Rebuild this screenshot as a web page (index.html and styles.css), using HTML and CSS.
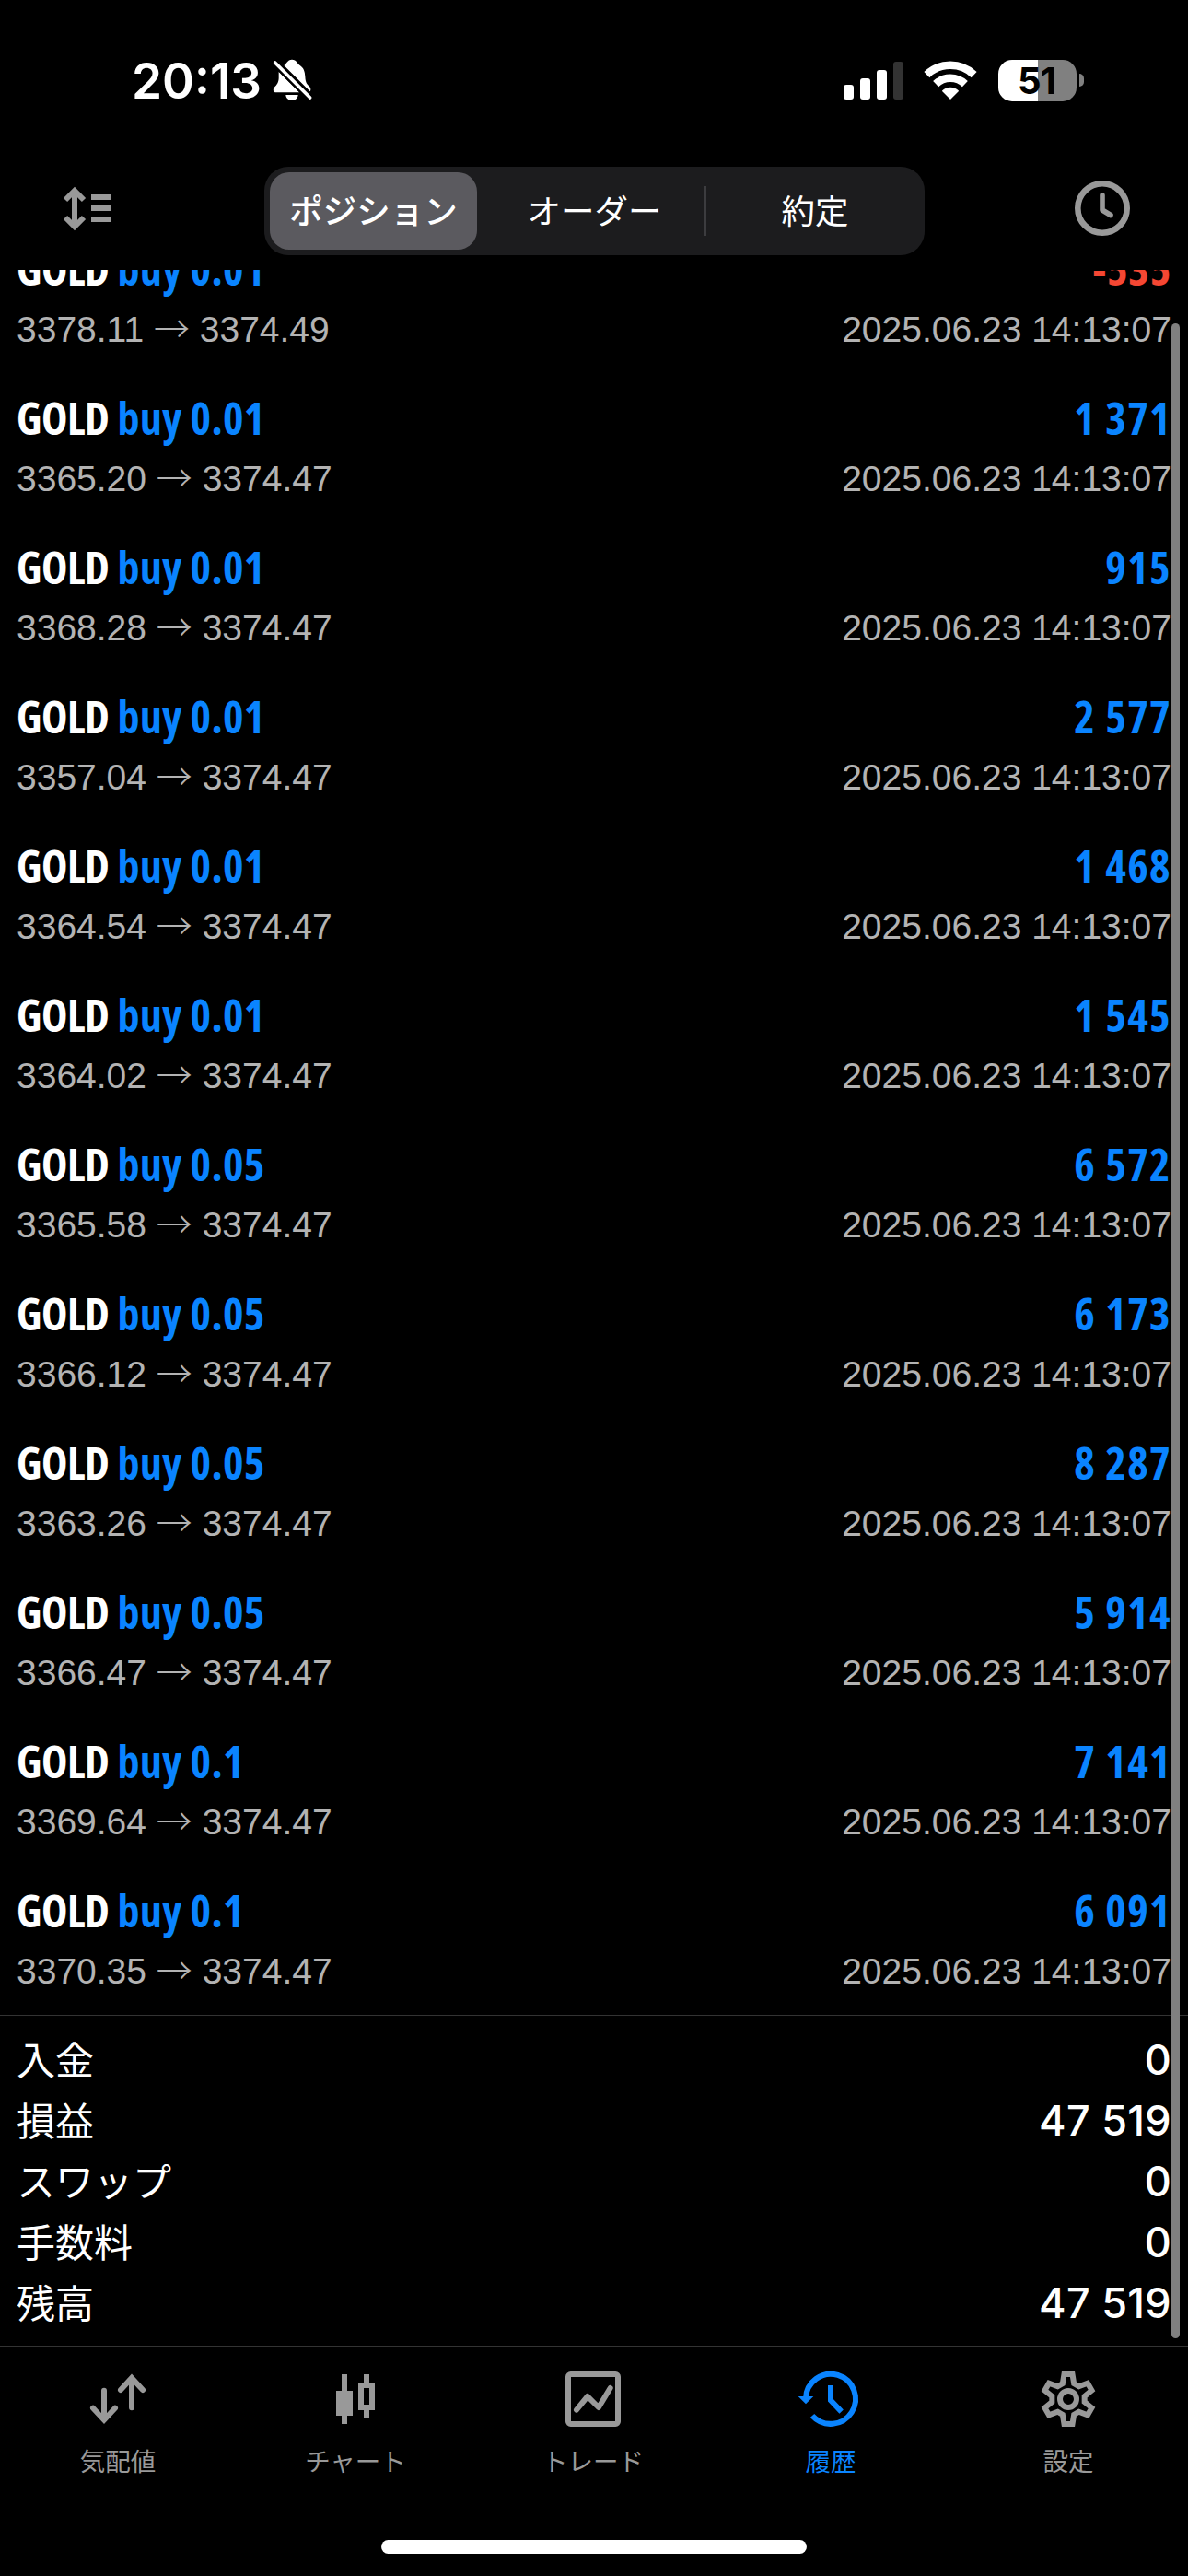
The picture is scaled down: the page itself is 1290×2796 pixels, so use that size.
FILE: index.html
```
<!DOCTYPE html>
<html lang="ja">
<head>
    <meta charset="utf-8">
    <title>履歴</title>
    <link rel="stylesheet" href="styles.css">
</head>
<body>
    <div class="screen">
        <div class="status-bar">
            <span class="time">20:13</span>
            <svg class="bell" viewBox="529 75 129 138">
                <path fill="#fff" d="M566 96 C574 92 577 77 592 77 C607 77 610 91 617 95 C631 104 634 116 635 132 C636 152 641 158 650 166 C654 171 654 177 651 181 Z"/>
                <path fill="#fff" d="M549 117 L616 184 H540 C531 184 529 174 534 168 C544 158 548 152 549 138 Z"/>
                <path fill="#fff" d="M572 192 H612 C609 216 575 216 572 192 Z"/>
                <path stroke="#000" stroke-width="24" d="M546 96 L660 210"/>
                <path stroke="#fff" stroke-width="11" stroke-linecap="round" d="M537 87 L651 201"/>
            </svg>
            <svg class="signal" viewBox="0 0 65 42">
                <rect x="0" y="26" width="11" height="16" rx="3"/>
                <rect x="18" y="19" width="11" height="23" rx="3"/>
                <rect x="36" y="10" width="11" height="32" rx="3"/>
                <rect x="54" y="1" width="11" height="41" rx="3" class="off"/>
            </svg>
            <svg class="wifi" viewBox="340 75 174 127">
                <g fill="none" stroke="#fff" stroke-width="26">
                    <path d="M349.5 120.5 A112 112 0 0 1 504.5 120.5"/>
                    <path d="M379 151 A69.5 69.5 0 0 1 475 151"/>
                </g>
                <path fill="#fff" stroke="#fff" stroke-width="4" stroke-linejoin="round" d="M427 199 L402 174 A36 36 0 0 1 452 174 Z"/>
            </svg>
            <div class="battery"><span>51</span></div>
            <div class="battery-tip"></div>
        </div>

        <div class="nav">
            <svg class="sort" viewBox="69 202 52 50">
                <g fill="none" stroke="#999" stroke-width="6">
                    <path d="M81 207 V246"/>
                    <path d="M71 217 L81 207 L91 217"/>
                    <path d="M71 236 L81 246 L91 236"/>
                    <path d="M99 214 H120 M99 226 H120 M99 238 H120"/>
                </g>
            </svg>
            <div class="segments">
                <div class="segment active">ポジション</div>
                <div class="segment">オーダー</div>
                <div class="segment last">約定</div>
            </div>
            <svg class="clock" viewBox="0 0 60 60">
                <g fill="none" stroke="#999" stroke-linecap="round" stroke-linejoin="round">
                    <circle cx="30" cy="30" r="26.7" stroke-width="6.6"/>
                    <path stroke-width="5.6" d="M30 16 V32 L39 37.5"/>
                </g>
            </svg>
        </div>

        <div class="history">
            <div class="deals">
                <div class="deal">
                    <div class="line"><span class="name">GOLD <b>buy 0.01</b></span><span class="profit loss">-535</span></div>
                    <div class="line sub"><span>3378.11 <i>→</i> 3374.49</span><span>2025.06.23 14:13:07</span></div>
                </div>
                <div class="deal">
                    <div class="line"><span class="name">GOLD <b>buy 0.01</b></span><span class="profit">1 371</span></div>
                    <div class="line sub"><span>3365.20 <i>→</i> 3374.47</span><span>2025.06.23 14:13:07</span></div>
                </div>
                <div class="deal">
                    <div class="line"><span class="name">GOLD <b>buy 0.01</b></span><span class="profit">915</span></div>
                    <div class="line sub"><span>3368.28 <i>→</i> 3374.47</span><span>2025.06.23 14:13:07</span></div>
                </div>
                <div class="deal">
                    <div class="line"><span class="name">GOLD <b>buy 0.01</b></span><span class="profit">2 577</span></div>
                    <div class="line sub"><span>3357.04 <i>→</i> 3374.47</span><span>2025.06.23 14:13:07</span></div>
                </div>
                <div class="deal">
                    <div class="line"><span class="name">GOLD <b>buy 0.01</b></span><span class="profit">1 468</span></div>
                    <div class="line sub"><span>3364.54 <i>→</i> 3374.47</span><span>2025.06.23 14:13:07</span></div>
                </div>
                <div class="deal">
                    <div class="line"><span class="name">GOLD <b>buy 0.01</b></span><span class="profit">1 545</span></div>
                    <div class="line sub"><span>3364.02 <i>→</i> 3374.47</span><span>2025.06.23 14:13:07</span></div>
                </div>
                <div class="deal">
                    <div class="line"><span class="name">GOLD <b>buy 0.05</b></span><span class="profit">6 572</span></div>
                    <div class="line sub"><span>3365.58 <i>→</i> 3374.47</span><span>2025.06.23 14:13:07</span></div>
                </div>
                <div class="deal">
                    <div class="line"><span class="name">GOLD <b>buy 0.05</b></span><span class="profit">6 173</span></div>
                    <div class="line sub"><span>3366.12 <i>→</i> 3374.47</span><span>2025.06.23 14:13:07</span></div>
                </div>
                <div class="deal">
                    <div class="line"><span class="name">GOLD <b>buy 0.05</b></span><span class="profit">8 287</span></div>
                    <div class="line sub"><span>3363.26 <i>→</i> 3374.47</span><span>2025.06.23 14:13:07</span></div>
                </div>
                <div class="deal">
                    <div class="line"><span class="name">GOLD <b>buy 0.05</b></span><span class="profit">5 914</span></div>
                    <div class="line sub"><span>3366.47 <i>→</i> 3374.47</span><span>2025.06.23 14:13:07</span></div>
                </div>
                <div class="deal">
                    <div class="line"><span class="name">GOLD <b>buy 0.1</b></span><span class="profit">7 141</span></div>
                    <div class="line sub"><span>3369.64 <i>→</i> 3374.47</span><span>2025.06.23 14:13:07</span></div>
                </div>
                <div class="deal">
                    <div class="line"><span class="name">GOLD <b>buy 0.1</b></span><span class="profit">6 091</span></div>
                    <div class="line sub"><span>3370.35 <i>→</i> 3374.47</span><span>2025.06.23 14:13:07</span></div>
                </div>
            </div>

            <div class="summary">
                <div class="total"><span>入金</span><span class="value">0</span></div>
                <div class="total"><span>損益</span><span class="value">47 519</span></div>
                <div class="total"><span>スワップ</span><span class="value">0</span></div>
                <div class="total"><span>手数料</span><span class="value">0</span></div>
                <div class="total"><span>残高</span><span class="value">47 519</span></div>
            </div>
            <div class="scrollbar"></div>
        </div>

        <div class="tab-bar">
            <div class="tab">
                <svg viewBox="114 102 180 180">
                    <g fill="none" stroke="currentColor" stroke-width="18" stroke-linecap="round">
                        <path d="M159 164 V258 M123 221 L159 260 L195 221"/>
                        <path d="M249 220 V126 M213 162 L249 123 L285 162"/>
                    </g>
                </svg>
                <span>気配値</span>
            </div>
            <div class="tab">
                <svg viewBox="888 102 180 180">
                    <g fill="currentColor">
                        <path d="M933 111 H951 V165 H969 V246 H951 V273 H933 V246 H915 V165 H933 Z"/>
                        <path fill-rule="evenodd" d="M1005 111 H1023 V138 H1041 V228 H1023 V255 H1005 V228 H987 V138 H1005 Z M1005 156 V210 H1023 V156 Z"/>
                    </g>
                </svg>
                <span>チャート</span>
            </div>
            <div class="tab">
                <svg viewBox="162 102 180 180">
                    <g fill="none" stroke="currentColor" stroke-width="18" stroke-linecap="round">
                        <rect x="171" y="111" width="162" height="162" rx="8"/>
                        <path d="M198 227 L234 183 L270 219 L308 156" stroke-linejoin="round"/>
                    </g>
                </svg>
                <span>トレード</span>
            </div>
            <div class="tab selected">
                <svg viewBox="936 102 180 180">
                    <g fill="none" stroke="currentColor" stroke-width="18">
                        <path d="M945 190 A81 81 0 1 1 966 246"/>
                        <path d="M1026 147 V196 L1061 233"/>
                    </g>
                    <path fill="currentColor" d="M920 183 H970 L945 208 Z"/>
                </svg>
                <span>履歴</span>
            </div>
            <div class="tab">
                <svg viewBox="-90 -90 180 180">
                    <g fill="none" stroke="currentColor" stroke-width="18">
                        <path d="M-18.5 -50.5 L-13.5 -81 L13.5 -81 L18.5 -50.5 L34.5 -41.3 L63 -52 L76.5 -28.6 L53 -9.2 L53 9.2 L76.5 28.6 L63 52 L34.5 41.3 L18.5 50.5 L13.5 81 L-13.5 81 L-18.5 50.5 L-34.5 41.3 L-63 52 L-76.5 28.6 L-53 9.2 L-53 -9.2 L-76.5 -28.6 L-63 -52 L-34.5 -41.3 Z"/>
                        <circle r="27"/>
                    </g>
                </svg>
                <span>設定</span>
            </div>
        </div>
        <div class="home-indicator"></div>
    </div>
</body>
</html>
```
FILE: styles.css
```
* {
    margin: 0;
    padding: 0;
    box-sizing: border-box;
}

body {
    background: #000;
    color: #fff;
    font-family: "Liberation Sans", "Noto Sans CJK JP", sans-serif;
}

svg {
    display: block;
    overflow: visible;
    flex-shrink: 0;
}

.screen {
    width: 1290px;
    height: 2796px;
    overflow: hidden;
    display: flex;
    flex-direction: column;
}

/* ステータスバー */
.status-bar {
    height: 177px;
    padding: 0 113px 3px 143px;
    display: flex;
    align-items: center;
    flex-shrink: 0;
}

.time {
    width: 153px;
    padding-top: 2px;
    font-family: Inter, sans-serif;
    font-size: 53px;
    font-weight: 600;
    line-height: 60px;
}

.bell {
    width: 43px;
    height: 46px;
}

.signal {
    width: 65px;
    height: 42px;
    margin-left: auto;
    fill: #fff;
}

.signal .off {
    fill: #333;
}

.wifi {
    width: 58px;
    height: 42px;
    margin-left: 22px;
}

.battery {
    width: 85px;
    height: 45px;
    margin-left: 23px;
    padding-right: 2px;
    border-radius: 15px;
    background: linear-gradient(90deg, #fff 43px, #808080 43px);
    color: #000;
    font-family: Inter, sans-serif;
    font-size: 40px;
    font-weight: 700;
    letter-spacing: -1px;
    line-height: 46px;
    text-align: center;
}

.battery-tip {
    width: 5px;
    height: 14px;
    margin-left: 3px;
    border-radius: 0 5px 5px 0;
    background: #808080;
}

/* ナビゲーション */
.nav {
    height: 116px;
    padding: 4px 63px 0 69px;
    display: flex;
    justify-content: space-between;
    flex-shrink: 0;
}

.sort {
    width: 52px;
    height: 50px;
    margin-top: 21px;
}

.clock {
    width: 60px;
    height: 60px;
    margin-top: 15px;
}

.segments {
    width: 717px;
    height: 96px;
    margin-left: 3px;
    padding: 6px;
    display: grid;
    grid-template-columns: 225px 246px 1fr;
    border-radius: 26px;
    background: #1c1c1e;
}

.segment {
    font-family: "Noto Sans CJK JP", sans-serif;
    font-size: 36.5px;
    line-height: 81px;
    text-align: center;
    font-weight: 400;
    padding-left: 9px;
}

.segment.active {
    padding: 0;
    border-radius: 21px;
    background: #5b5a5f;
    font-weight: 500;
}

.segment.last {
    height: 54px;
    margin-top: 15px;
    padding: 0 0 0 5px;
    line-height: 51px;
    border-left: 3px solid #3c3c3f;
}

/* 履歴一覧 */
.history {
    position: relative;
    height: 2253px;
    flex-shrink: 0;
}

.deals {
    height: 1894px;
    overflow: hidden;
    display: flex;
    flex-direction: column;
    justify-content: flex-end;
}

.deal {
    height: 162px;
    padding: 15px 18px 0;
    flex-shrink: 0;
}

.line {
    height: 70px;
    display: flex;
    justify-content: space-between;
    white-space: nowrap;
    font-family: "Open Sans", "Noto Sans", sans-serif;
    font-size: 48px;
    font-weight: 700;
    line-height: 68px;
}

.name {
    font-stretch: 75%;
    letter-spacing: -0.5px;
}

.name b {
    margin-left: 1px;
    color: #0a84ff;
    font-weight: 700;
    letter-spacing: 0.3px;
}

.profit {
    color: #0a84ff;
    font-stretch: 75%;
    letter-spacing: 1.4px;
}

.profit.loss {
    color: #f54733;
    letter-spacing: 0.8px;
}

.line.sub {
    height: 60px;
    color: #b3b3b3;
    font-family: "Liberation Sans", sans-serif;
    font-size: 39px;
    font-weight: 400;
    line-height: 60px;
}

.sub i {
    font-family: "Noto Sans CJK JP", sans-serif;
    font-style: normal;
    font-weight: 200;
    line-height: 1;
}

.summary {
    height: 359px;
    padding: 13px 18px 0;
    border-top: 1px solid #333;
}

.total {
    height: 66px;
    display: flex;
    justify-content: space-between;
    font-family: "Noto Sans CJK JP", sans-serif;
    font-size: 42px;
    line-height: 65px;
}

.value {
    font-family: Inter, sans-serif;
    font-size: 45px;
    font-weight: 500;
    letter-spacing: 0.3px;
    line-height: 69px;
}

.scrollbar {
    position: absolute;
    top: 58px;
    right: 9px;
    width: 9px;
    height: 2187px;
    border-radius: 5px;
    background: #808080;
}

/* タブバー */
.tab-bar {
    height: 211px;
    padding-top: 27px;
    display: grid;
    grid-template-columns: repeat(5, 258px);
    border-top: 1px solid #333;
    flex-shrink: 0;
}

.tab {
    padding-right: 2px;
    display: flex;
    flex-direction: column;
    align-items: center;
    color: #999;
    font-family: "Noto Sans CJK JP", sans-serif;
    font-size: 27.5px;
    line-height: 40px;
}

.tab svg {
    width: 60px;
    height: 60px;
    margin-bottom: 16px;
}

.tab.selected {
    color: #0a84ff;
}

.home-indicator {
    width: 462px;
    height: 15px;
    margin: 0 auto;
    border-radius: 8px;
    background: #fff;
    flex-shrink: 0;
}
```
